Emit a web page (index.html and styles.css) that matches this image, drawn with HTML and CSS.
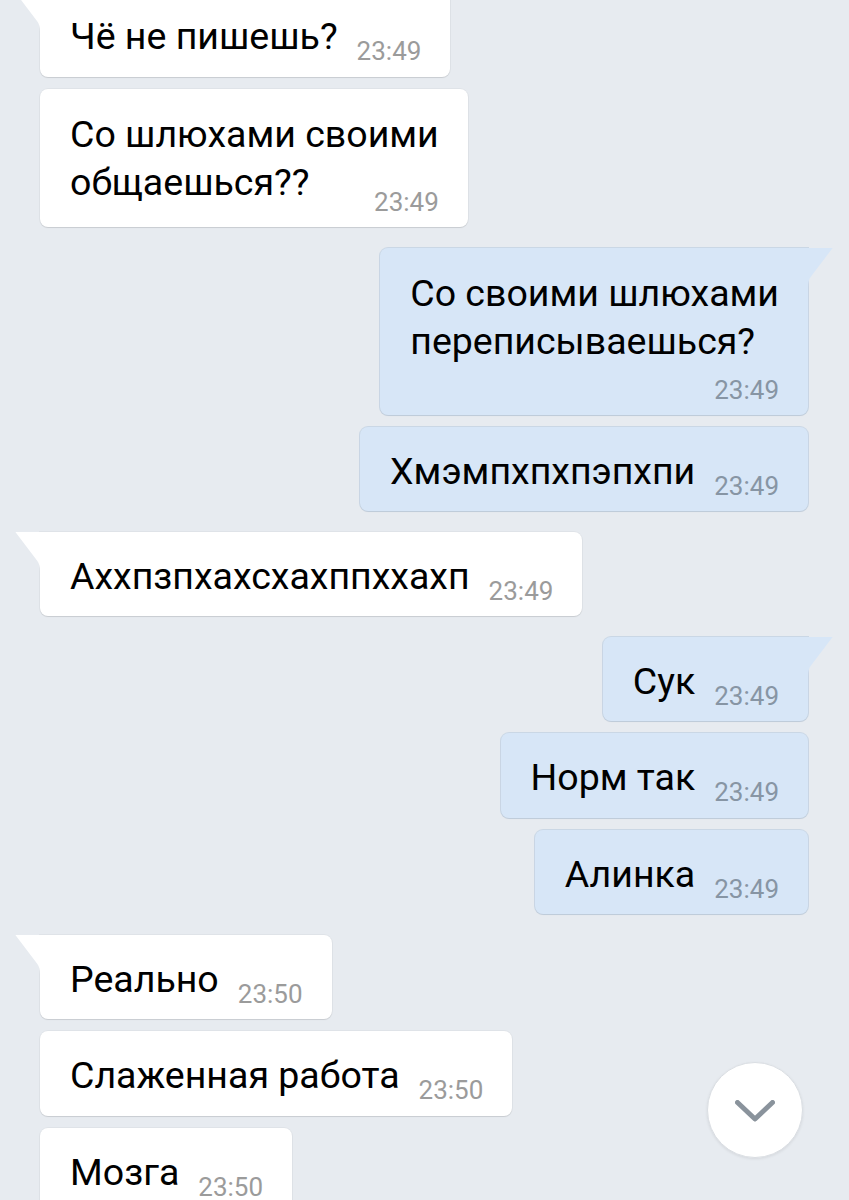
FILE: index.html
```html
<!DOCTYPE html>
<html lang="ru">
<head>
<meta charset="utf-8">
<title>Чат</title>
<link rel="stylesheet" href="styles.css">
</head>
<body>
<div class="chat">
  <div class="msg in tail first"><span class="text">Чё не пишешь?</span><span class="time">23:49</span></div>
  <div class="msg in multi overlap"><span class="text">Со шлюхами своими<br>общаешься??</span><span class="time">23:49</span></div>

  <div class="msg out tail multi stacked group"><span class="text">Со своими шлюхами<br>переписываешься?</span><span class="time">23:49</span></div>
  <div class="msg out"><span class="text">Хмэмпхпхпэпхпи</span><span class="time">23:49</span></div>

  <div class="msg in tail group"><span class="text">Аххпзпхахсхахппххахп</span><span class="time">23:49</span></div>

  <div class="msg out tail group"><span class="text">Сук</span><span class="time">23:49</span></div>
  <div class="msg out"><span class="text">Норм так</span><span class="time">23:49</span></div>
  <div class="msg out"><span class="text">Алинка</span><span class="time">23:49</span></div>

  <div class="msg in tail group"><span class="text">Реально</span><span class="time">23:50</span></div>
  <div class="msg in"><span class="text">Слаженная работа</span><span class="time">23:50</span></div>
  <div class="msg in"><span class="text">Мозга</span><span class="time">23:50</span></div>
</div>

<button class="scroll-down" type="button" aria-label="Вниз">
  <svg width="40" height="22" viewBox="0 0 40 22" aria-hidden="true">
    <path d="M2.5 2.5 L20 19 L37.5 2.5" fill="none" stroke="#8a939c" stroke-width="5" stroke-linecap="round" stroke-linejoin="round"/>
  </svg>
</button>
</body>
</html>
```
FILE: styles.css
```css
html, body {
  margin: 0;
  padding: 0;
  height: 1200px;
  overflow: hidden;
  background: #e7ebf0;
}

body {
  font-family: Roboto, "Noto Sans", "Liberation Sans", sans-serif;
  color: #000;
}

.chat {
  display: flex;
  flex-direction: column;
  gap: 12px;
  padding: 0 41px 0 40px;
}

.msg {
  position: relative;
  display: flex;
  align-items: flex-end;
  gap: 19px;
  padding: 20px 29px 16.5px 30px;
  border-radius: 8px;
  font-size: 37.5px;
  line-height: 48px;
}

.msg .text {
  white-space: nowrap;
}

.msg .time {
  font-size: 26px;
  line-height: 30px;
  margin-bottom: -6px;
  white-space: nowrap;
}

.in {
  align-self: flex-start;
  background: #ffffff;
  box-shadow: 0 1px 1px rgba(0, 0, 0, 0.1), 0 0 0 1px rgba(0, 0, 0, 0.03);
}

.in .time {
  color: #9b9b9b;
}

.out {
  align-self: flex-end;
  background: #d7e6f7;
  box-shadow: 0 0 0 1px rgba(150, 178, 210, 0.35), 0 1px 1px rgba(0, 0, 0, 0.08);
}

.out .time {
  color: #8795a4;
}

.first {
  margin-top: -8px;
}

.group {
  margin-top: 8.5px;
}

/* multi-line bubbles */
.multi {
  display: grid;
  padding: 21px 29px 10px 30px;
  gap: 0;
}

.multi .time {
  justify-self: end;
  margin-bottom: 0;
}

.multi.overlap .time {
  margin-top: -18.5px;
}

.multi.stacked .time {
  margin-top: 10px;
}

/* tails */
.tail::before {
  content: "";
  position: absolute;
  top: 0;
  width: 26px;
  height: 42px;
  background: inherit;
}

.in.tail {
  border-top-left-radius: 0;
}

.in.tail::before {
  left: -25px;
  clip-path: path("M0 0 H26 V42 H25 V40 C25 35 24 31.6 22 29 Z");
}

.out.tail {
  border-top-right-radius: 0;
}

.out.tail::before {
  right: -25px;
  clip-path: path("M26 0 H0 V42 H1 V40 C1 35 2 31.6 4 29 Z");
}

/* scroll-down button */
.scroll-down {
  position: fixed;
  left: 707px;
  top: 1062px;
  width: 96px;
  height: 96px;
  padding: 0;
  border: 1px solid #d9dde2;
  border-radius: 50%;
  background: #ffffff;
  box-shadow: 0 1px 3px rgba(0, 0, 0, 0.08);
  display: flex;
  align-items: center;
  justify-content: center;
}

.scroll-down svg {
  display: block;
  margin-top: 2px;
}
```
